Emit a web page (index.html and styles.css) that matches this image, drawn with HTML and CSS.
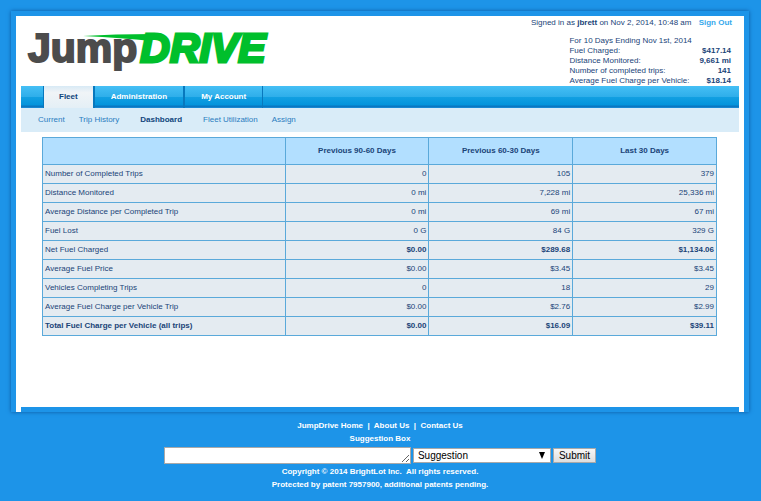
FILE: index.html
```html
<!DOCTYPE html>
<html lang="en">
<head>
    <meta charset="UTF-8">
    <meta name="viewport" content="width=device-width, initial-scale=1.0">
    <title>JumpDRIVE - Dashboard</title>
    <link rel="stylesheet" href="styles.css">
</head>
<body>
    <div class="frame">
        <header class="header">
            <h1 class="logo">
                <span class="logo-jump">Jump</span><span class="logo-drive">DRIVE</span>
                <svg class="logo-swoosh" width="72" height="7" viewBox="0 0 72 7" aria-hidden="true">
                    <path d="M0 2 Q30 0 72 0 L68 7 Q40 4 0 2 Z" fill="#00bf2c"/>
                </svg>
            </h1>
            <div class="account">
                <p class="signed-in">Signed in as <b>jbrett</b> on Nov 2, 2014, 10:48 am <a href="#" class="sign-out">Sign Out</a></p>
                <table class="stats">
                    <tr><td colspan="2">For 10 Days Ending Nov 1st, 2014</td></tr>
                    <tr><td>Fuel Charged:</td><td class="stat">$417.14</td></tr>
                    <tr><td>Distance Monitored:</td><td class="stat">9,661 mi</td></tr>
                    <tr><td>Number of completed trips:</td><td class="stat">141</td></tr>
                    <tr><td>Average Fuel Charge per Vehicle:</td><td class="stat">$18.14</td></tr>
                </table>
            </div>
        </header>

        <nav class="tabs">
            <a href="#" class="tab active">Fleet</a>
            <a href="#" class="tab">Administration</a>
            <a href="#" class="tab">My Account</a>
        </nav>
        <nav class="subnav">
            <a href="#">Current</a>
            <a href="#">Trip History</a>
            <a href="#" class="active">Dashboard</a>
            <a href="#">Fleet Utilization</a>
            <a href="#">Assign</a>
        </nav>

        <main class="content">
            <table class="report">
                <thead>
                    <tr><th class="label-col"></th><th>Previous 90-60 Days</th><th>Previous 60-30 Days</th><th>Last 30 Days</th></tr>
                </thead>
                <tbody>
                    <tr><td>Number of Completed Trips</td><td>0</td><td>105</td><td>379</td></tr>
                    <tr><td>Distance Monitored</td><td>0 mi</td><td>7,228 mi</td><td>25,336 mi</td></tr>
                    <tr><td>Average Distance per Completed Trip</td><td>0 mi</td><td>69 mi</td><td>67 mi</td></tr>
                    <tr><td>Fuel Lost</td><td>0 G</td><td>84 G</td><td>329 G</td></tr>
                    <tr class="net"><td>Net Fuel Charged</td><td>$0.00</td><td>$289.68</td><td>$1,134.06</td></tr>
                    <tr><td>Average Fuel Price</td><td>$0.00</td><td>$3.45</td><td>$3.45</td></tr>
                    <tr><td>Vehicles Completing Trips</td><td>0</td><td>18</td><td>29</td></tr>
                    <tr><td>Average Fuel Charge per Vehicle Trip</td><td>$0.00</td><td>$2.76</td><td>$2.99</td></tr>
                    <tr class="total"><td>Total Fuel Charge per Vehicle (all trips)</td><td>$0.00</td><td>$16.09</td><td>$39.11</td></tr>
                </tbody>
            </table>
        </main>
    </div>

    <footer class="footer">
        <p><a href="#">JumpDrive Home</a>&nbsp; |&nbsp; <a href="#">About Us</a>&nbsp; |&nbsp; <a href="#">Contact Us</a></p>
        <p><label for="suggestion">Suggestion Box</label></p>
        <form class="suggest">
            <textarea id="suggestion" class="suggest-text" rows="1"></textarea>
            <div class="suggest-type">
                <select aria-label="Type">
                    <option>Suggestion</option>
                    <option>Problem</option>
                </select>
            </div>
            <button type="button">Submit</button>
        </form>
        <p>Copyright © 2014 BrightLot Inc.&nbsp; All rights reserved.</p>
        <p>Protected by patent 7957900, additional patents pending.</p>
    </footer>
</body>
</html>
```
FILE: styles.css
```css
:root {
    --page-blue: #1d94e8;
    --text: #1a4478;
    --grid: #5aa9da;
}

* {
    box-sizing: border-box;
}

body {
    margin: 0;
    padding: 11px 12px 0 11px;
    background: var(--page-blue);
    color: var(--text);
    font-family: "Liberation Sans", Arial, sans-serif;
    font-size: 8px;
    line-height: 10px;
}

p, h1 {
    margin: 0;
}

a {
    color: inherit;
    text-decoration: none;
}

table {
    border-collapse: collapse;
}

.frame {
    padding: 0 5px;
    background: #fff;
    border: 5px solid var(--page-blue);
    border-bottom: 0;
    box-shadow: 0 0 4px #0c58a0;
}

/* header */
.header {
    display: flex;
    justify-content: space-between;
    height: 70px;
}

.logo {
    position: relative;
    display: flex;
    gap: 3px;
    align-self: flex-start;
    padding: 8px 0 0 7px;
    font-size: 41px;
    font-weight: bold;
    line-height: 48px;
    -webkit-text-stroke: 2px;
}

.logo-jump {
    color: #4c4c4c;
}

.logo-drive {
    color: #00bf2c;
    font-style: italic;
    -webkit-text-stroke: 3px;
}

.logo-swoosh {
    position: absolute;
    left: 62px;
    top: 18px;
}

.account {
    padding: 2px 7px 0 0;
}

.signed-in {
    margin-bottom: 8px;
}

.sign-out {
    margin-left: 5px;
    color: #36a9ec;
    font-weight: bold;
}

.stats {
    margin: 0 1px 0 auto;
}

.stats td {
    padding: 0;
}

.stats .stat {
    padding-left: 10px;
    font-weight: bold;
    text-align: right;
}

/* navigation */
.tabs {
    display: flex;
    height: 22px;
    padding-left: 22px;
    background: linear-gradient(#45bff5, #2eaeea 50%, #12a0e2 50%, #0494dc 86%, #0872bc 92%, #1d8fdb);
}

.tab {
    padding: 0 16px;
    border-right: 2px solid #0878bd;
    color: #fff;
    font-weight: bold;
    line-height: 21px;
}

.tab.active {
    padding: 0 15px;
    border-left: 1px solid #0878bd;
    background: linear-gradient(#d8eaf5, #f0f4f7 30%, #e4eff6);
    color: #10457c;
}

.tab:last-child {
    border-right-width: 1px;
}

.subnav {
    display: flex;
    padding-left: 10px;
    background: #d9ecf8;
    line-height: 24px;
}

.subnav a {
    padding: 0 7px;
    color: #2b7cc0;
}

.subnav .active {
    padding: 0 14px;
    color: #10457c;
    font-weight: bold;
}

/* report */
.content {
    min-height: 280px;
    padding: 5px 22px 0 21px;
    border-bottom: 5px solid var(--page-blue);
}

.report {
    width: 100%;
    table-layout: fixed;
}

.report th,
.report td {
    height: 19px;
    padding: 0 2px;
    border: 1px solid var(--grid);
}

.report th {
    height: 27px;
    background: #b2dfff;
}

.report .label-col {
    width: 36%;
}

.report td {
    background: #e4ebf1;
    text-align: right;
}

.report td:first-child {
    text-align: left;
}

.report .total td,
.report .net td:not(:first-child) {
    font-weight: bold;
}

/* footer */
.footer {
    padding-top: 7px;
    color: #fff;
    font-weight: bold;
    line-height: 13px;
    text-align: center;
}

.suggest {
    display: flex;
    justify-content: center;
    align-items: center;
    gap: 2px;
    margin: 2px 0 1px;
}

.suggest-text {
    width: 247px;
    height: 17px;
    padding: 1px;
    border: 1px solid #a9a9a9;
    font: 10px/13px "Liberation Sans", Arial, sans-serif;
}

.suggest-type {
    position: relative;
}

.suggest-type select {
    display: block;
    width: 138px;
    height: 15px;
    padding: 0 4px;
    border: 1px solid #a9a9a9;
    border-radius: 0;
    background: #fff;
    color: #000;
    font: 10px/13px "Liberation Sans", Arial, sans-serif;
    appearance: none;
}

.suggest-type::after {
    content: "";
    position: absolute;
    top: 4px;
    right: 6px;
    border: 3px solid transparent;
    border-top: 7px solid #000;
    border-bottom: 0;
    pointer-events: none;
}

.suggest button {
    height: 15px;
    padding: 0 5px;
    border: 1px solid #a9a9a9;
    background: linear-gradient(#f6f6f6, #dedede);
    color: #000;
    font: 10px/13px "Liberation Sans", Arial, sans-serif;
}
```
